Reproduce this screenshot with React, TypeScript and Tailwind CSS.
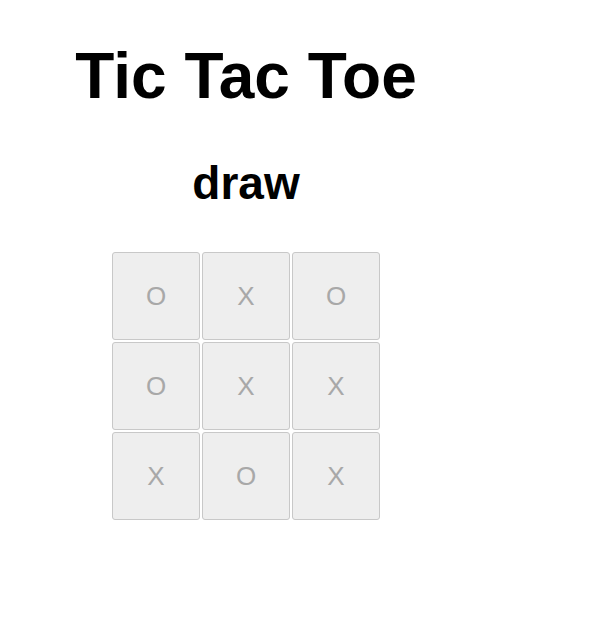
const board = ['O', 'X', 'O', 'O', 'X', 'X', 'X', 'O', 'X']

export default function App() {
  return (
    <div className="min-h-[630px] bg-white font-['Liberation_Sans',Arial,sans-serif]">
      <div className="w-[492px] flex flex-col items-center pt-[44px]">
        <h1 className="text-[64px] leading-[64px] font-bold text-black">Tic Tac Toe</h1>
        <h2 className="mt-[52px] text-[46px] leading-[46px] font-bold text-black">draw</h2>
        <div className="mt-[46px] grid grid-cols-3 gap-[2px]">
          {board.map((v, i) => (
            <button
              key={i}
              className="w-[88px] h-[88px] bg-[#eeeeee] border border-[#c8c8c8] rounded-[3px] text-[26px] text-[#a8a8a8] flex items-center justify-center"
            >
              {v}
            </button>
          ))}
        </div>
      </div>
    </div>
  )
}
